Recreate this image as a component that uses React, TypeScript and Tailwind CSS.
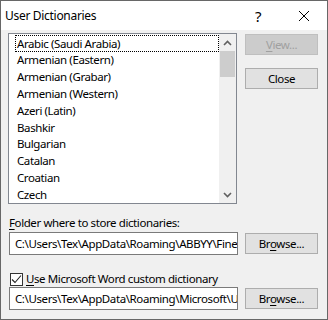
import React from "react";

const items = [
  "Arabic (Saudi Arabia)",
  "Armenian (Eastern)",
  "Armenian (Grabar)",
  "Armenian (Western)",
  "Azeri (Latin)",
  "Bashkir",
  "Bulgarian",
  "Catalan",
  "Croatian",
  "Czech",
];

function BrowseButton() {
  return (
    <button className="w-[73px] h-[21px] mt-[1px] bg-[#e1e1e1] border border-[#adadad] text-black flex items-center justify-center">
      <span>
        Br<span className="underline underline-offset-2">o</span>wse...
      </span>
    </button>
  );
}

function PathInput({ value }: { value: string }) {
  return (
    <div className="w-[229px] h-[23px] ml-[1px] bg-white border border-[#7a7a7a] flex items-center pl-[5px] overflow-hidden whitespace-nowrap text-black">
      {value}
    </div>
  );
}

export default function App() {
  return (
    <div
      className="w-[328px] h-[320px] border border-[#676767] flex flex-col text-[11.5px] tracking-[-0.4px] leading-[16px] select-none"
      style={{ fontFamily: '"Noto Sans", "Open Sans", sans-serif' }}
    >
      {/* title bar */}
      <div className="h-[29px] bg-white flex items-center pl-[4px] text-black text-[12px] tracking-[-0.3px]">
        <span className="flex-1">User Dictionaries</span>
        <span className="w-[10px] text-[15px] mr-[35px] text-center">?</span>
        <svg width="12" height="12" viewBox="0 0 12 12" className="mr-[17px]">
          <path d="M1 1L11 11M11 1L1 11" stroke="#000" strokeWidth="1" />
        </svg>
      </div>

      <div className="flex-1 bg-[#f0f0f0] flex flex-col pl-[7px]">
        <div className="flex mt-[3px]">
          {/* list box */}
          <div className="w-[229px] h-[171px] bg-white border border-[#828790] flex">
            <div className="flex-1 flex flex-col pl-[6px] pt-[1px]">
              {items.map((it, i) => (
                <div
                  key={it}
                  className={
                    "h-[17px] flex items-center text-black " +
                    (i === 0 ? "border border-dotted border-black pl-[1px]" : "pl-[2px]")
                  }
                >
                  {it}
                </div>
              ))}
            </div>
            {/* scrollbar */}
            <div className="w-[17px] bg-[#f0f0f0] flex flex-col">
              <div className="h-[17px] flex items-center justify-center">
                <svg width="9" height="6" viewBox="0 0 9 6">
                  <path d="M1 5L4.5 1.5L8 5" stroke="#606060" strokeWidth="1.6" fill="none" />
                </svg>
              </div>
              <div className="h-[26px] mx-[1px] bg-[#cdcdcd]" />
              <div className="flex-1" />
              <div className="h-[17px] flex items-center justify-center">
                <svg width="9" height="6" viewBox="0 0 9 6">
                  <path d="M1 1L4.5 4.5L8 1" stroke="#606060" strokeWidth="1.6" fill="none" />
                </svg>
              </div>
            </div>
          </div>

          {/* buttons */}
          <div className="flex flex-col ml-[8px] mt-[1px] gap-[13px]">
            <button className="w-[73px] h-[21px] bg-[#cccccc] border border-[#bfbfbf] text-[#a0a0a0] flex items-center justify-center">
              <span>
                <span className="underline underline-offset-2">V</span>iew...
              </span>
            </button>
            <button className="w-[73px] h-[21px] bg-[#e1e1e1] border border-[#adadad] text-black flex items-center justify-center">
              Close
            </button>
          </div>
        </div>

        <div className="mt-[11px] ml-[1px] text-black">
          <span className="underline underline-offset-2">F</span>older where to store dictionaries:
        </div>

        <div className="flex items-start mt-[1px]">
          <PathInput value={"C:\\Users\\Tex\\AppData\\Roaming\\ABBYY\\FineReader"} />
          <div className="ml-[7px]">
            <BrowseButton />
          </div>
        </div>

        <div className="flex items-center mt-[17px] ml-[2px] h-[14px]">
          <div className="w-[13px] h-[13px] bg-white border border-[#333333] flex items-center justify-center">
            <svg width="11" height="11" viewBox="0 0 11 11">
              <path d="M1 5.5L4 8.5L10 1.5" stroke="#222" strokeWidth="1.1" fill="none" />
            </svg>
          </div>
          <span className="ml-[3px] text-black">
            <span className="underline underline-offset-2">U</span>se Microsoft Word custom dictionary
          </span>
        </div>

        <div className="flex items-start mt-[1px]">
          <PathInput value={"C:\\Users\\Tex\\AppData\\Roaming\\Microsoft\\UProof"} />
          <div className="ml-[7px]">
            <BrowseButton />
          </div>
        </div>
      </div>
    </div>
  );
}
